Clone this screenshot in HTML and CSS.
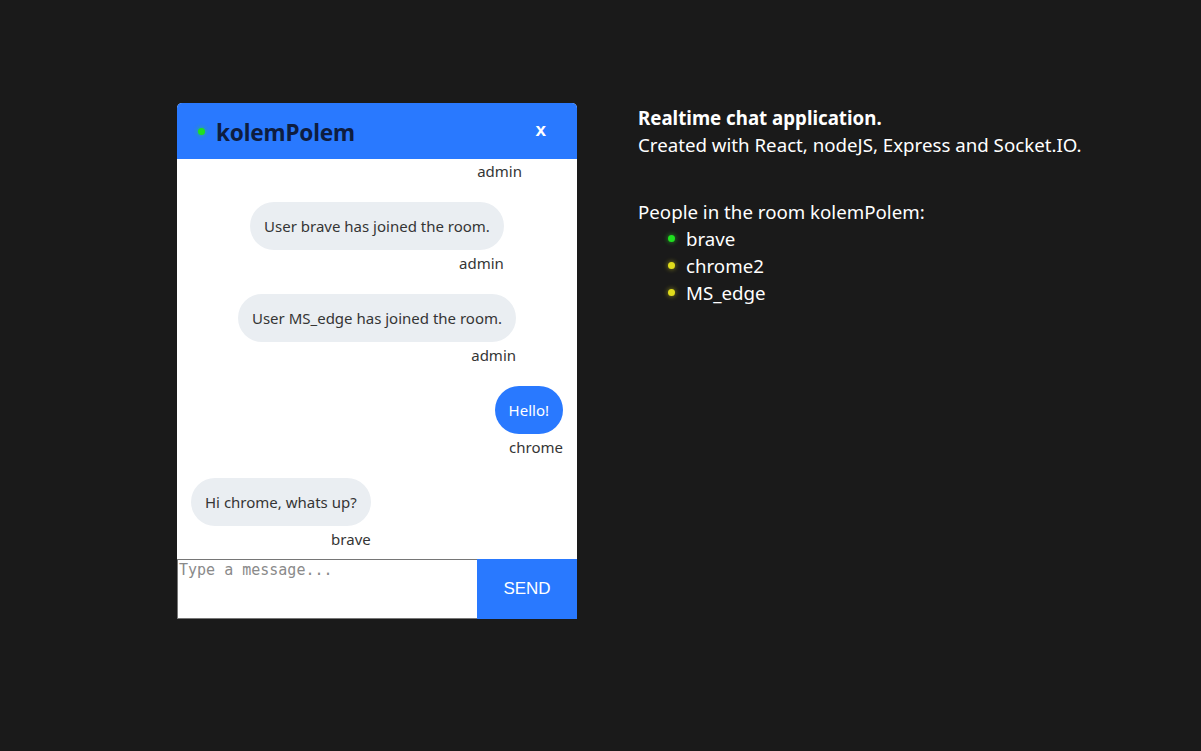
FILE: index.html
```html
<!DOCTYPE html>
<html lang="en">
<head>
<meta charset="utf-8">
<title>Chat</title>
<link rel="stylesheet" href="styles.css">
</head>
<body>
<div class="page">
  <div class="chat">
    <div class="chat-header">
      <div class="room">
        <span class="dot dot-green"></span>
        <h3 class="room-name">kolemPolem</h3>
      </div>
      <span class="close">x</span>
    </div>
    <div class="messages">
      <div class="msg msg-center">
        <div class="bubble bubble-light">chrome, welcome to the kolemPolem</div>
        <div class="sender">admin</div>
      </div>
      <div class="msg msg-center">
        <div class="bubble bubble-light">User brave has joined the room.</div>
        <div class="sender">admin</div>
      </div>
      <div class="msg msg-center">
        <div class="bubble bubble-light">User MS_edge has joined the room.</div>
        <div class="sender">admin</div>
      </div>
      <div class="msg msg-right">
        <div class="bubble bubble-blue">Hello!</div>
        <div class="sender">chrome</div>
      </div>
      <div class="msg msg-left msg-last">
        <div class="bubble bubble-light">Hi chrome, whats up?</div>
        <div class="sender">brave</div>
      </div>
    </div>
    <form class="composer">
      <textarea class="input" placeholder="Type a message..."></textarea>
      <button type="button" class="send">SEND</button>
    </form>
  </div>
  <div class="info">
    <p class="title">Realtime chat application.</p>
    <p class="subtitle">Created with React, nodeJS, Express and Socket.IO.</p>
    <p class="people">People in the room kolemPolem:</p>
    <ul class="users">
      <li><span class="dot dot-green"></span>brave</li>
      <li><span class="dot dot-yellow"></span>chrome2</li>
      <li><span class="dot dot-yellow"></span>MS_edge</li>
    </ul>
  </div>
</div>
</body>
</html>
```
FILE: styles.css
```css
html, body {
  margin: 0;
  padding: 0;
  height: 100%;
}
body {
  background: #1a1a1a;
  font-family: "Noto Sans", "Open Sans", sans-serif;
}
.page {
  display: flex;
  align-items: flex-start;
  padding: 103px 0 0 177px;
  gap: 61px;
}
.chat {
  width: 400px;
  display: flex;
  flex-direction: column;
  background: #ffffff;
  border-radius: 5px 5px 0 0;
  overflow: hidden;
}
.chat-header {
  height: 56px;
  background: #2979ff;
  display: flex;
  align-items: center;
  justify-content: space-between;
  padding: 0 31px 0 21px;
}
.room {
  display: flex;
  align-items: center;
}
.room-name {
  margin: 0 0 0 11px;
  font-size: 22.6px;
  font-weight: 700;
  color: #0e1d40;
  letter-spacing: -0.2px;
  padding-top: 2px;
}
.close {
  color: #ffffff;
  font-weight: 700;
  font-size: 19px;
  font-family: "Liberation Sans", Arial, sans-serif;
  margin-top: -3px;
}
.dot {
  display: inline-block;
  width: 7px;
  height: 7px;
  border-radius: 50%;
  flex-shrink: 0;
}
.dot-green {
  background: #1fe01f;
  box-shadow: 0 0 4px 1px rgba(40, 220, 40, 0.45);
}
.dot-yellow {
  background: #e0dc1c;
  box-shadow: 0 0 4px 1px rgba(220, 215, 30, 0.4);
}
.messages {
  height: 400px;
  display: flex;
  flex-direction: column;
  justify-content: flex-end;
  overflow: hidden;
}
.msg {
  display: flex;
  flex-direction: column;
  padding: 10px 14px 10px;
  flex-shrink: 0;
}
.msg-last {
  padding-bottom: 9px;
}
.msg-center { align-self: center; align-items: flex-end; }
.msg-right { align-self: flex-end; align-items: flex-end; }
.msg-left { align-self: flex-start; align-items: flex-end; }
.bubble {
  height: 48px;
  box-sizing: border-box;
  display: flex;
  align-items: center;
  padding: 0 14px;
  border-radius: 24px;
  font-size: 15px;
  white-space: nowrap;
}
.bubble-light {
  background: #eaeef2;
  color: #353535;
}
.bubble-blue {
  background: #2979ff;
  color: #ffffff;
}
.sender {
  margin-top: 2px;
  line-height: 22px;
  font-size: 15px;
  color: #353535;
}
.composer {
  display: flex;
  height: 60px;
  margin: 0;
}
.input {
  width: 300px;
  box-sizing: border-box;
  margin: 0;
  border: 1px solid #767676;
  border-right: none;
  padding: 1px 1px;
  resize: none;
  font-family: "DejaVu Sans Mono", "Liberation Mono", monospace;
  font-size: 15px;
}
.input::placeholder {
  color: #8a8a8a;
}
.send {
  width: 100px;
  border: none;
  background: #2979ff;
  color: #ffffff;
  font-family: "Liberation Sans", Arial, sans-serif;
  font-size: 17px;
  margin: 0;
  padding: 0;
}
.info {
  color: #ffffff;
  font-size: 18.7px;
  line-height: 27px;
  padding-top: 1px;
}
.info p {
  margin: 0;
}
.title {
  font-weight: 700;
}
.people {
  margin-top: 40px !important;
}
.users {
  list-style: none;
  margin: 0;
  padding: 0 0 0 30px;
}
.users li {
  display: flex;
  align-items: center;
  gap: 11px;
}
```
